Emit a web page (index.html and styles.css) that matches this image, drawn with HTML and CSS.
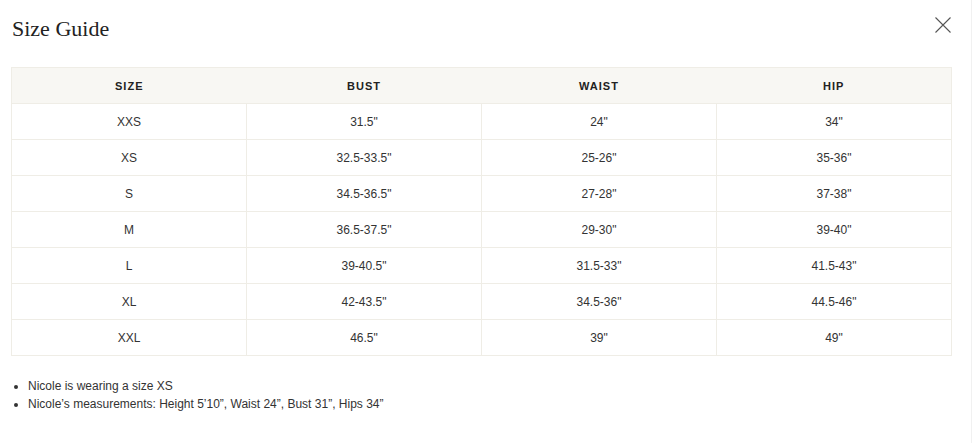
FILE: index.html
```html
<!DOCTYPE html>
<html lang="en">
<head>
<meta charset="utf-8">
<title>Size Guide</title>
<link rel="stylesheet" href="styles.css">
</head>
<body>
<div class="modal">
  <div class="modal-head">
    <h2 class="title">Size Guide</h2>
    <button class="close" aria-label="Close">
      <svg width="16" height="16" viewBox="0 0 16 16"><path d="M0.5 0.5L15.5 15.5M15.5 0.5L0.5 15.5" stroke="#555" stroke-width="1.1" fill="none"/></svg>
    </button>
  </div>
  <table class="sizes">
    <thead>
      <tr><th>SIZE</th><th>BUST</th><th>WAIST</th><th>HIP</th></tr>
    </thead>
    <tbody>
      <tr><td>XXS</td><td>31.5"</td><td>24"</td><td>34"</td></tr>
      <tr><td>XS</td><td>32.5-33.5"</td><td>25-26"</td><td>35-36"</td></tr>
      <tr><td>S</td><td>34.5-36.5"</td><td>27-28"</td><td>37-38"</td></tr>
      <tr><td>M</td><td>36.5-37.5"</td><td>29-30"</td><td>39-40"</td></tr>
      <tr><td>L</td><td>39-40.5"</td><td>31.5-33"</td><td>41.5-43"</td></tr>
      <tr><td>XL</td><td>42-43.5"</td><td>34.5-36"</td><td>44.5-46"</td></tr>
      <tr><td>XXL</td><td>46.5"</td><td>39"</td><td>49"</td></tr>
    </tbody>
  </table>
  <ul class="notes">
    <li>Nicole is wearing a size XS</li>
    <li>Nicole’s measurements: Height 5’10”, Waist 24”, Bust 31”, Hips 34”</li>
  </ul>
</div>
</body>
</html>
```
FILE: styles.css
```css
html, body {
  margin: 0;
  padding: 0;
  background: #fff;
}
.modal {
  width: 972px;
  height: 443px;
  box-sizing: border-box;
  padding: 16px 20px 0 11px;
  font-family: "Liberation Sans", Arial, sans-serif;
  color: #333;
  border-right: 1px solid #f1f1f1;
}
.modal-head {
  display: flex;
  justify-content: space-between;
  align-items: flex-start;
  height: 26px;
  margin-bottom: 25px;
}
.title {
  margin: 0 0 0 1px;
  font-family: "Liberation Serif", "Times New Roman", serif;
  font-weight: 400;
  font-size: 22px;
  line-height: 26px;
  color: #222;
}
.close {
  border: 0;
  background: none;
  padding: 0;
  margin: 1px 0 0 0;
  width: 16px;
  height: 16px;
  display: block;
}
.close svg { display: block; }
.sizes {
  width: 941px;
  border-collapse: collapse;
  table-layout: fixed;
  border: 1px solid #efede6;
}
.sizes th, .sizes td {
  height: 35px;
  padding: 0;
  text-align: center;
  vertical-align: middle;
}
.sizes th {
  background: #f8f7f3;
  font-size: 11px;
  font-weight: 700;
  letter-spacing: 1px;
  color: #222;
}
.sizes td {
  font-size: 12px;
  color: #333;
  border: 1px solid #efede6;
}
.notes {
  margin: 21px 0 0 0;
  padding-left: 17px;
  font-size: 12px;
  line-height: 18px;
  color: #333;
}
```
